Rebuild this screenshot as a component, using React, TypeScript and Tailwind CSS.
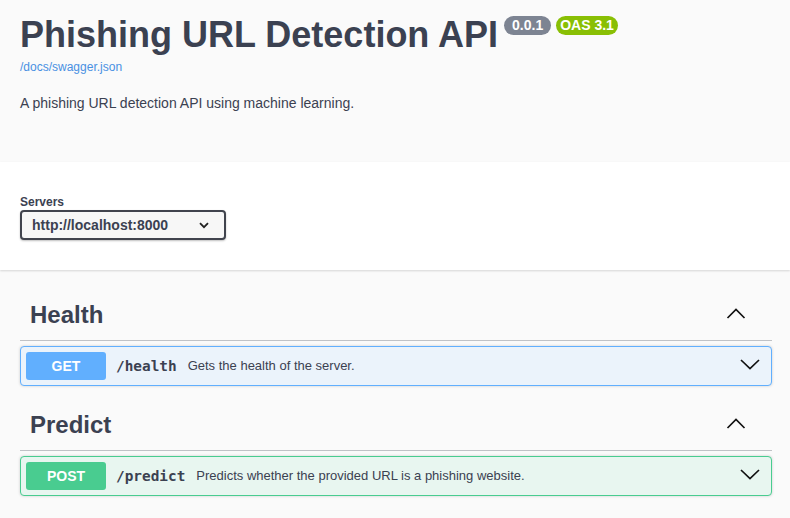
import React from "react";

const font = { fontFamily: '"Liberation Sans", Arial, sans-serif' };
const mono = { fontFamily: '"DejaVu Sans Mono", "Liberation Mono", monospace' };

function UpChevron() {
  return (
    <svg width="20" height="20" viewBox="0 0 20 20" className="shrink-0">
      <polyline points="1.5,13 10,4.5 18.5,13" fill="none" stroke="#111" strokeWidth="1.7" />
    </svg>
  );
}

function DownChevron() {
  return (
    <svg width="20" height="20" viewBox="0 0 20 20" className="shrink-0">
      <polyline points="1,4 10,12.5 19,4" fill="none" stroke="#111" strokeWidth="1.7" />
    </svg>
  );
}

function Op({
  method,
  path,
  desc,
  color,
  bg,
}: {
  method: string;
  path: string;
  desc: string;
  color: string;
  bg: string;
}) {
  return (
    <div
      className="flex items-center h-[40px] rounded-[4px] border px-[5px] shadow-[0_0_3px_rgba(0,0,0,0.19)]"
      style={{ borderColor: color, backgroundColor: bg }}
    >
      <div
        className="w-[80px] h-[28px] rounded-[3px] flex items-center justify-center text-white text-[14px] font-bold leading-[16px]"
        style={{ backgroundColor: color }}
      >
        {method}
      </div>
      <span className="ml-[10px] text-[14.4px] font-bold text-[#3b4151] leading-[18px]" style={mono}>
        {path}
      </span>
      <span className="ml-[11px] text-[13px] text-[#3b4151] leading-[16px]">{desc}</span>
      <div className="ml-auto mr-[6px]">
        <DownChevron />
      </div>
    </div>
  );
}

function Tag({ name }: { name: string }) {
  return (
    <div className="h-[51px] border-b border-[rgba(59,65,81,0.3)] flex items-center pl-[10px] pr-[26px] mb-[5px]">
      <span className="text-[24px] font-bold leading-[30px] text-[#3b4151]">{name}</span>
      <div className="ml-auto">
        <UpChevron />
      </div>
    </div>
  );
}

export default function App() {
  return (
    <div className="min-h-[518px] bg-[#fafafa] text-[#3b4151]" style={font}>
      <div className="h-[162px] px-[20px] pt-[15px]">
        <div className="flex items-start">
          <h1 className="text-[36px] font-bold leading-[40px] text-[#3b4151]">Phishing URL Detection API</h1>
          <span className="ml-[6px] mt-[1px] rounded-full bg-[#7d8492] px-[8px] text-white text-[14px] font-bold leading-[19px]">
            0.0.1
          </span>
          <span className="ml-[5px] mt-[1px] rounded-full bg-[#89bf04] px-[4px] text-white text-[14px] font-bold leading-[19px]">
            OAS 3.1
          </span>
        </div>
        <div className="mt-[5px] text-[12px] leading-[14px] text-[#4990e2]">/docs/swagger.json</div>
        <p className="mt-[21px] text-[14px] leading-[16px] text-[#3b4151]">
          A phishing URL detection API using machine learning.
        </p>
      </div>

      <div className="bg-white h-[108px] px-[20px] pt-[33px] shadow-[0_1px_2px_0_rgba(0,0,0,0.15)] relative">
        <div className="text-[12px] font-bold leading-[14px] text-[#3b4151]">Servers</div>
        <div className="mt-[1px] w-[206px] h-[30px] border-2 border-[#41444e] rounded-[4px] bg-[#f7f7f7] shadow-[0_1px_2px_0_rgba(0,0,0,0.25)] flex items-center">
          <span className="pl-[10px] text-[14px] font-bold leading-[16px] text-[#3b4151]">http://localhost:8000</span>
          <svg width="10" height="7" viewBox="0 0 10 7" className="ml-auto mr-[15px]">
            <polyline points="1,1.2 5,5.2 9,1.2" fill="none" stroke="#222" strokeWidth="1.8" />
          </svg>
        </div>
      </div>

      <div className="pl-[20px] pr-[18px] pt-[20px]">
        <Tag name="Health" />
        <Op method="GET" path="/health" desc="Gets the health of the server." color="#61affe" bg="#ebf3fb" />
        <div className="h-[14px]" />
        <Tag name="Predict" />
        <Op
          method="POST"
          path="/predict"
          desc="Predicts whether the provided URL is a phishing website."
          color="#49cc90"
          bg="#e8f6f0"
        />
      </div>
    </div>
  );
}
